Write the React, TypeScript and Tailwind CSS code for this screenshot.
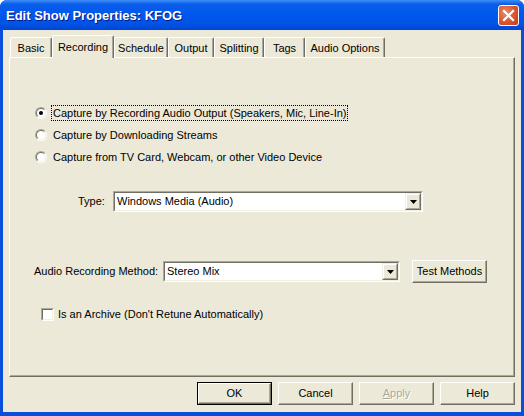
import React from "react";

const tabs = [
  { label: "Basic", w: "w-[42px]" },
  { label: "Recording", w: "w-[62px]", active: true },
  { label: "Schedule", w: "w-[54px]" },
  { label: "Output", w: "w-[46px]" },
  { label: "Splitting", w: "w-[50px]" },
  { label: "Tags", w: "w-[41px]" },
  { label: "Audio Options", w: "w-[80px]" },
];

function Radio({ checked }: { checked?: boolean }) {
  return (
    <span className="w-[12px] h-[12px] rounded-full border border-t-[#aca899] border-l-[#aca899] border-r-white border-b-white flex items-center justify-center shrink-0">
      <span className="w-[10px] h-[10px] rounded-full border border-t-[#716f64] border-l-[#716f64] border-r-[#f1efe2] border-b-[#f1efe2] bg-white flex items-center justify-center">
        {checked && <span className="w-[4px] h-[4px] rounded-full bg-black" />}
      </span>
    </span>
  );
}

function Checkbox() {
  return (
    <span className="w-[13px] h-[13px] border border-t-[#aca899] border-l-[#aca899] border-r-white border-b-white flex shrink-0">
      <span className="flex-1 border border-t-[#716f64] border-l-[#716f64] border-r-[#f1efe2] border-b-[#f1efe2] bg-white" />
    </span>
  );
}

function Combo({ value, width }: { value: string; width: string }) {
  return (
    <div className={`${width} h-[21px] border border-t-[#aca899] border-l-[#aca899] border-r-white border-b-white flex`}>
      <div className="flex-1 flex border border-t-[#716f64] border-l-[#716f64] border-r-[#f1efe2] border-b-[#f1efe2] bg-white">
        <div className="flex-1 flex items-center pl-[2px] whitespace-nowrap">{value}</div>
        <div className="w-[16px] border border-t-[#f1efe2] border-l-[#f1efe2] border-r-[#716f64] border-b-[#716f64] flex">
          <div className="flex-1 border border-t-white border-l-white border-r-[#aca899] border-b-[#aca899] bg-[#ece9d8] flex items-center justify-center">
            <svg width="7" height="4" viewBox="0 0 7 4">
              <path d="M0 0h7L3.5 4z" fill="#000" />
            </svg>
          </div>
        </div>
      </div>
    </div>
  );
}

function Button({ children, isDefault, disabled, width = "w-[75px]" }: { children: React.ReactNode; isDefault?: boolean; disabled?: boolean; width?: string }) {
  const face = (
    <div className="flex-1 flex items-center justify-center border border-t-white border-l-white border-r-[#716f64] border-b-[#716f64] shadow-[inset_-1px_-1px_0_#aca899] bg-[#ece9d8]">
      <span className={disabled ? "text-[#aca899] [text-shadow:1px_1px_0_#ffffff]" : ""}>{children}</span>
    </div>
  );
  return isDefault ? (
    <div className={`${width} h-[23px] flex border border-black`}>{face}</div>
  ) : (
    <div className={`${width} h-[23px] flex`}>{face}</div>
  );
}

export default function App() {
  return (
    <div className="w-[524px] h-[416px] flex flex-col bg-[#0a4fdc] rounded-t-[7px] overflow-hidden font-['Liberation_Sans',Arial,sans-serif] text-[11px] text-black">
      {/* title bar */}
      <div className="h-[30px] shrink-0 flex items-center justify-between pl-[6px] pr-[5px] bg-[linear-gradient(to_bottom,#3f8ff9_0%,#0a5de9_14%,#0058ee_45%,#0053e6_80%,#0045d2_100%)]">
        <span className="text-[13px] font-bold text-white pt-[1px] [text-shadow:1px_1px_0_#0a1883]">
          Edit Show Properties: KFOG
        </span>
        <div className="w-[21px] h-[21px] rounded-[3px] border border-white bg-[radial-gradient(circle_at_35%_35%,#ec8a68_0%,#d9552f_55%,#c23d18_100%)] flex items-center justify-center">
          <svg width="13" height="13" viewBox="0 0 13 13">
            <path d="M2 2l9 9M11 2l-9 9" stroke="#fff" strokeWidth="2.2" strokeLinecap="square" />
          </svg>
        </div>
      </div>

      {/* dialog body */}
      <div className="flex-1 mx-[3px] mb-[4px] bg-[#ece9d8] flex flex-col pt-[5px]">
        {/* tabs */}
        <div className="h-[22px] flex items-end pl-[7px]">
          {tabs.map((t) =>
            t.active ? (
              <div
                key={t.label}
                className={`${t.w} h-[23px] -mb-[1px] relative z-10 flex items-start justify-center pt-[3px] bg-[#ece9d8] rounded-t-[2px] border-l border-t border-r border-l-white border-t-white border-r-[#716f64] shadow-[inset_-1px_0_0_#aca899]`}
              >
                {t.label}
              </div>
            ) : (
              <div
                key={t.label}
                className={`${t.w} h-[20px] flex items-center justify-center pt-[1px] rounded-t-[2px] border-l border-t border-r border-l-white border-t-white border-r-[#716f64] shadow-[inset_-1px_0_0_#aca899]`}
              >
                {t.label}
              </div>
            )
          )}
        </div>

        {/* tab panel */}
        <div className="mx-[6px] h-[320px] shrink-0 border border-t-white border-l-white border-r-[#716f64] border-b-[#716f64] shadow-[inset_-1px_-1px_0_#aca899] flex flex-col">
          <div className="mt-[44px] pl-[25px] flex flex-col">
            <div className="h-[22px] flex items-center">
              <Radio checked />
              <span className="ml-[4px] px-[1px] border border-dotted border-black leading-[14px]">
                Capture by Recording Audio Output (Speakers, Mic, Line-In)
              </span>
            </div>
            <div className="h-[22px] flex items-center">
              <Radio />
              <span className="ml-[4px] px-[1px] border border-transparent leading-[14px]">
                Capture by Downloading Streams
              </span>
            </div>
            <div className="h-[22px] flex items-center">
              <Radio />
              <span className="ml-[4px] px-[1px] border border-transparent leading-[14px]">
                Capture from TV Card, Webcam, or other Video Device
              </span>
            </div>
          </div>

          <div className="mt-[23px] pl-[68px] flex items-center">
            <span className="w-[35px]">Type:</span>
            <Combo value="Windows Media (Audio)" width="w-[310px]" />
          </div>

          <div className="mt-[48px] pl-[24px] h-[23px] flex items-center">
            <span className="w-[129px]">Audio Recording Method:</span>
            <Combo value="Stereo Mix" width="w-[237px]" />
            <div className="ml-[12px]">
              <Button width="w-[75px]">Test Methods</Button>
            </div>
          </div>

          <div className="mt-[25px] pl-[31px] h-[13px] flex items-center">
            <Checkbox />
            <span className="ml-[4px]">Is an Archive (Don't Retune Automatically)</span>
          </div>
        </div>

        {/* bottom buttons */}
        <div className="mt-[5px] pr-[6px] flex justify-end gap-[6px]">
          <Button isDefault>OK</Button>
          <Button>Cancel</Button>
          <Button disabled>
            <span className="underline">A</span>pply
          </Button>
          <Button>Help</Button>
        </div>
      </div>
    </div>
  );
}
